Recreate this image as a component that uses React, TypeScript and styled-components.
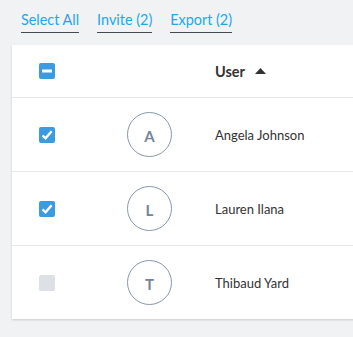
import React from "react";
import styled, { createGlobalStyle } from "styled-components";

const Global = createGlobalStyle`
  html, body { margin: 0; padding: 0; background: #f1f2f4; overflow: hidden; }
  body { font-family: Lato, "Open Sans", sans-serif; width: 353px; height: 337px; }
`;

const Page = styled.div`
  padding: 0 0 0 12px;
  width: 353px;
  box-sizing: border-box;
  overflow: hidden;
`;

const Toolbar = styled.div`
  display: flex;
  gap: 18px;
  padding: 11px 0 0 9px;
  height: 34px;
  box-sizing: border-box;
`;

const Action = styled.a`
  font-size: 14.4px;
  line-height: 18px;
  color: #1ba8f0;
  text-decoration: none;
  border-bottom: 1px solid #444a52;
  padding-bottom: 2px;
  height: 19px;
  box-sizing: content-box;
  cursor: pointer;
`;

const Card = styled.div`
  margin: 11px 0 3px;
  width: calc(100% + 20px);
  background: #fff;
  box-shadow: 0 1px 2px rgba(0, 0, 0, 0.16);
`;

const Row = styled.div<{ $header?: boolean; $last?: boolean }>`
  display: grid;
  grid-template-columns: 88px 88px 1fr;
  align-items: center;
  padding-left: 27px;
  height: ${(p) => (p.$header ? 52 : 73)}px;
  border-bottom: ${(p) => (p.$last ? "none" : "1px solid #e6e8eb")};
`;

const Box = styled.span<{ $on?: boolean }>`
  width: 16px;
  height: 16px;
  border-radius: 2px;
  background: ${(p) => (p.$on ? "#3a9be0" : "#dde1e5")};
  display: flex;
  align-items: center;
  justify-content: center;
`;

const Avatar = styled.div`
  width: 43px;
  height: 41px;
  padding-top: 2px;
  border-radius: 50%;
  border: 1px solid #8898ab;
  display: flex;
  align-items: center;
  justify-content: center;
  font-size: 15px;
  font-weight: 700;
  color: #74859a;
`;

const HeadCell = styled.div`
  display: flex;
  align-items: center;
  gap: 10px;
  font-size: 14.5px;
  font-weight: 700;
  color: #333;
`;

const Name = styled.div`
  font-size: 13px;
  color: #333;
`;

const Minus = () => (
  <svg width="16" height="16" viewBox="0 0 16 16">
    <rect x="3" y="6.5" width="10" height="3" fill="#fff" />
  </svg>
);

const Check = () => (
  <svg width="16" height="16" viewBox="0 0 16 16">
    <path d="M3.5 8.3 L6.6 11.3 L12.6 4.2" fill="none" stroke="#fff" strokeWidth="2.4" />
  </svg>
);

const Arrow = () => (
  <svg width="11" height="6" viewBox="0 0 11 6">
    <path d="M0 6 L5.5 0 L11 6 Z" fill="#333" />
  </svg>
);

const users = [
  { letter: "A", name: "Angela Johnson", on: true },
  { letter: "L", name: "Lauren Ilana", on: true },
  { letter: "T", name: "Thibaud Yard", on: false },
];

export default function App() {
  return (
    <>
      <Global />
      <Page>
        <Toolbar>
          <Action>Select All</Action>
          <Action>Invite (2)</Action>
          <Action>Export (2)</Action>
        </Toolbar>
        <Card>
          <Row $header>
            <Box $on>
              <Minus />
            </Box>
            <span />
            <HeadCell>
              User <Arrow />
            </HeadCell>
          </Row>
          {users.map((u, i) => (
            <Row key={u.name} $last={i === users.length - 1}>
              <Box $on={u.on}>{u.on && <Check />}</Box>
              <Avatar>{u.letter}</Avatar>
              <Name>{u.name}</Name>
            </Row>
          ))}
        </Card>
      </Page>
    </>
  );
}
